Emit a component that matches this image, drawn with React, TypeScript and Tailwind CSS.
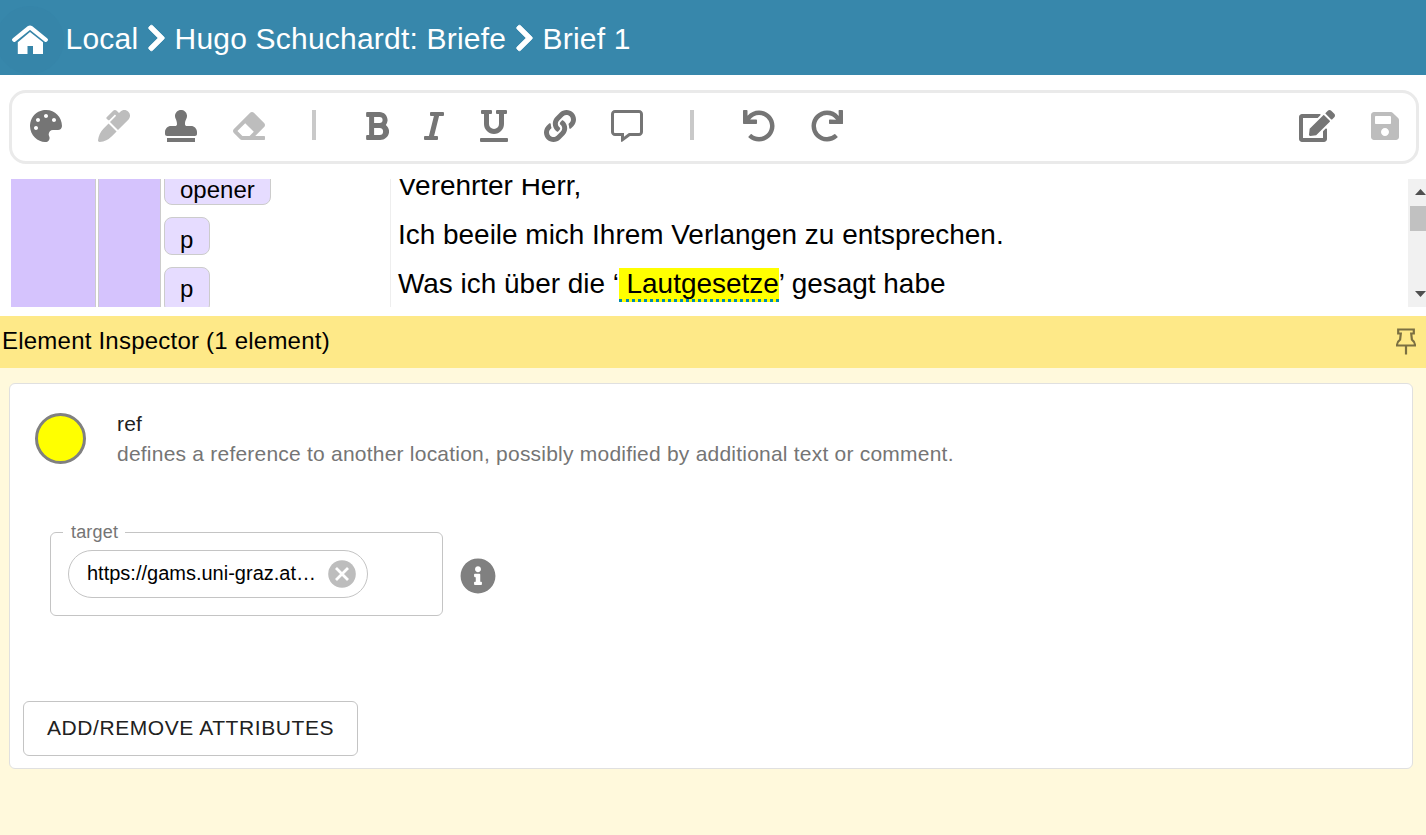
import type { IconType } from "react-icons";
import {
  FaBold,
  FaChevronRight,
  FaEdit,
  FaEraser,
  FaInfoCircle,
  FaItalic,
  FaLink,
  FaMarker,
  FaPalette,
  FaRedo,
  FaRegCommentAlt,
  FaSave,
  FaStamp,
  FaUnderline,
  FaUndo,
} from "react-icons/fa";

function HomeIcon() {
  return (
    <svg viewBox="0 0 36 29" className="h-[29px] w-9" fill="currentColor">
      <path
        d="M2.200 14.800 16.900 3a1.800 1.800 0 0 1 2.200 0L33.800 14.800"
        fill="none"
        stroke="currentColor"
        strokeWidth="4.200"
        strokeLinecap="round"
      />
      <path d="M18 6.900 31 17.300V29H21v-8h-5.500v8H5.800V17.300Z" />
    </svg>
  );
}

function PinIcon() {
  return (
    <svg viewBox="0 0 20 27" className="h-[27px] w-5" fill="none" stroke="currentColor" strokeWidth="2.200">
      <path d="M2.200 1.500h15.600v4h-2.600l.7 6.200c1.800 1.200 2.900 2.800 3.100 5.800H1c.2-3 1.300-4.600 3.100-5.800l.7-6.200H2.200Z" />
      <path d="M10 17.500v9" />
    </svg>
  );
}

function Tool({ icon: Icon, width, muted }: { icon: IconType; width: string; muted?: boolean }) {
  return (
    <button className={`shrink-0 pb-[2px] ${width} ${muted ? "text-[#bdbdbd]" : "text-[#757575]"}`}>
      <Icon className="h-8 w-full" />
    </button>
  );
}

function Divider() {
  return (
    <div className="ml-[47px] mr-[49px] pb-1">
      <div className="h-[30px] w-1 bg-[#c9c9c9]" />
    </div>
  );
}

function Separator() {
  return (
    <FaChevronRight
      className="ml-2 mr-[9px] h-[30px] w-[19px] shrink-0 stroke-current stroke-[14]"
      preserveAspectRatio="none"
    />
  );
}

function Header() {
  return (
    <header className="flex h-[75px] shrink-0 items-center overflow-hidden bg-[#3787ab] text-[30px] leading-[45px] tracking-[0.21px] text-white">
      <button className="-ml-1 mt-[4px] flex size-[68px] shrink-0 items-center justify-center rounded-full bg-[#3685a9]">
        <HomeIcon />
      </button>
      <span className="ml-[1.5px] w-[73px] whitespace-nowrap pt-px">Local</span>
      <Separator />
      <span className="w-[332px] whitespace-nowrap pt-px">Hugo Schuchardt: Briefe</span>
      <Separator />
      <span className="whitespace-nowrap pt-px">Brief 1</span>
    </header>
  );
}

function Toolbar() {
  return (
    <div className="ml-[9px] mt-[15px] flex h-[74px] w-[1410px] shrink-0 items-center rounded-[17px] border-[3px] border-[#eaeaea] pl-[18px] pr-[17.5px]">
      <div className="flex items-center gap-[35.6px]">
        <Tool icon={FaPalette} width="w-8" />
        <Tool icon={FaMarker} width="w-8" muted />
        <Tool icon={FaStamp} width="w-8" />
        <Tool icon={FaEraser} width="w-8" muted />
      </div>
      <Divider />
      <div className="flex items-center gap-[35.6px]">
        <Tool icon={FaBold} width="w-6" />
        <Tool icon={FaItalic} width="w-5" />
        <Tool icon={FaUnderline} width="w-7" />
        <Tool icon={FaLink} width="w-8" />
        <Tool icon={FaRegCommentAlt} width="w-8" />
      </div>
      <Divider />
      <div className="flex items-center gap-[35.8px]">
        <Tool icon={FaUndo} width="w-8" />
        <Tool icon={FaRedo} width="w-8" />
      </div>
      <div className="ml-auto flex items-center gap-[35.5px]">
        <Tool icon={FaEdit} width="w-9" />
        <Tool icon={FaSave} width="w-7" muted />
      </div>
    </div>
  );
}

function Tag({ label, height }: { label: string; height: string }) {
  return (
    <div
      className={`w-fit shrink-0 rounded-lg border border-[#cccccc] bg-[#e6dcff] pl-[15px] pr-[15.5px] text-2xl leading-[28px] ${height}`}
    >
      {label}
    </div>
  );
}

function Editor() {
  return (
    <div className="mt-[15px] flex h-32 shrink-0 overflow-hidden">
      <div className="ml-[11px] w-[85px] shrink-0 border-r border-[#cccccc] bg-[#d5c3fd]" />
      <div className="ml-[2px] w-[63px] shrink-0 border-x border-[#cccccc] bg-[#d5c3fd]" />
      <div className="ml-[3px] w-[226px] shrink-0">
        <div className="-mt-3 flex flex-col gap-3">
          <Tag label="opener" height="h-[38px] pt-[8px]" />
          <Tag label="p" height="h-[38px] pt-[8px]" />
          <Tag label="p" height="h-[46px] pt-[7px]" />
        </div>
      </div>
      <div className="flex-1 border-l border-[#eeeeee] pl-[7px] text-[27.95px] leading-[49px] text-black">
        <p className="-mt-[18.5px] whitespace-nowrap">Verehrter Herr,</p>
        <p className="mt-[0.5px] whitespace-nowrap">Ich beeile mich Ihrem Verlangen zu entsprechen.</p>
        <p className="whitespace-nowrap">
          Was ich über die ‘
          <span className="border-b-[3px] border-dotted border-[#008aae] bg-[#ffff00] pl-[7.5px]">Lautgesetze</span>’
          gesagt habe
        </p>
      </div>
      <div className="flex w-[18px] shrink-0 flex-col items-start bg-[#f1f1f1]">
        <svg viewBox="0 0 11 27" className="ml-[7px] h-[27px] w-[11px]" fill="#505050">
          <path d="M5.500 10 11 16H0Z" />
        </svg>
        <div className="ml-[2px] h-[25px] w-4 bg-[#c1c1c1]" />
        <svg viewBox="0 0 11 20" className="ml-[7px] mt-auto h-5 w-[11px]" fill="#505050">
          <path d="M0 4H11L5.500 10Z" />
        </svg>
      </div>
    </div>
  );
}

function TargetField() {
  return (
    <fieldset className="h-[93px] w-[393px] rounded-[6px] border border-[#c4c4c4] pl-[17px]">
      <legend className="-ml-[5px] pl-2 pr-[7px] text-[18px] leading-[18px] tracking-[0.17px] text-[#757575]">
        target
      </legend>
      <div className="mt-[9px] flex h-12 w-[300px] items-center rounded-full border border-[#c4c4c4] pl-[18px] text-black">
        <span className="w-[241px] whitespace-nowrap pb-[2px] text-[20px]">https://gams.uni-graz.at…</span>
        <svg viewBox="0 0 28 28" className="h-7 w-7 shrink-0">
          <circle cx="14" cy="14" r="13.800" fill="#bdbdbd" />
          <path d="m8 8 12 12M20 8 8 20" stroke="#fff" strokeWidth="2.800" />
        </svg>
      </div>
    </fieldset>
  );
}

function Inspector() {
  return (
    <section className="mt-[9px] flex flex-1 flex-col bg-[#fff9dc]">
      <div className="flex h-[52px] shrink-0 items-center justify-between bg-[#fee988] pb-[2px] pl-[2px] pr-[10px] text-2xl">
        <h2 className="whitespace-nowrap tracking-[0.22px] text-black">Element Inspector (1 element)</h2>
        <span className="text-[#7b7042]">
          <PinIcon />
        </span>
      </div>
      <div className="ml-[9px] mt-[15px] flex h-[386px] w-[1404px] shrink-0 flex-col rounded-[6px] border border-[#e0e0e0] bg-white">
        <div className="flex pl-[25px] pt-[29px]">
          <div className="h-[51px] w-[51px] rounded-full border-[3px] border-[#808080] bg-[#ffff00]" />
          <div className="-mt-[4px] ml-[31px] leading-[30px]">
            <div className="text-[21px] tracking-[0.2px] text-[#212121]">ref</div>
            <div className="whitespace-nowrap text-[21px] tracking-[0.22px] text-[#757575]">
              defines a reference to another location, possibly modified by additional text or comment.
            </div>
          </div>
        </div>
        <div className="flex pl-10 pt-[54px]">
          <TargetField />
          <FaInfoCircle className="ml-[17px] mt-[35px] h-[36px] w-[36px] text-[#808080]" />
        </div>
        <button className="mb-[12px] ml-[13px] mt-auto h-[55px] w-[335px] shrink-0 whitespace-nowrap rounded-[6px] border border-[#c4c4c4] pb-[2px] text-[21px] leading-none tracking-[0.58px] text-[#212121]">
          ADD/REMOVE ATTRIBUTES
        </button>
      </div>
    </section>
  );
}

export default function App() {
  return (
    <div className="flex h-[835px] w-[1426px] flex-col overflow-hidden bg-white font-['Liberation_Sans',Arial,sans-serif]">
      <Header />
      <Toolbar />
      <Editor />
      <Inspector />
    </div>
  );
}
